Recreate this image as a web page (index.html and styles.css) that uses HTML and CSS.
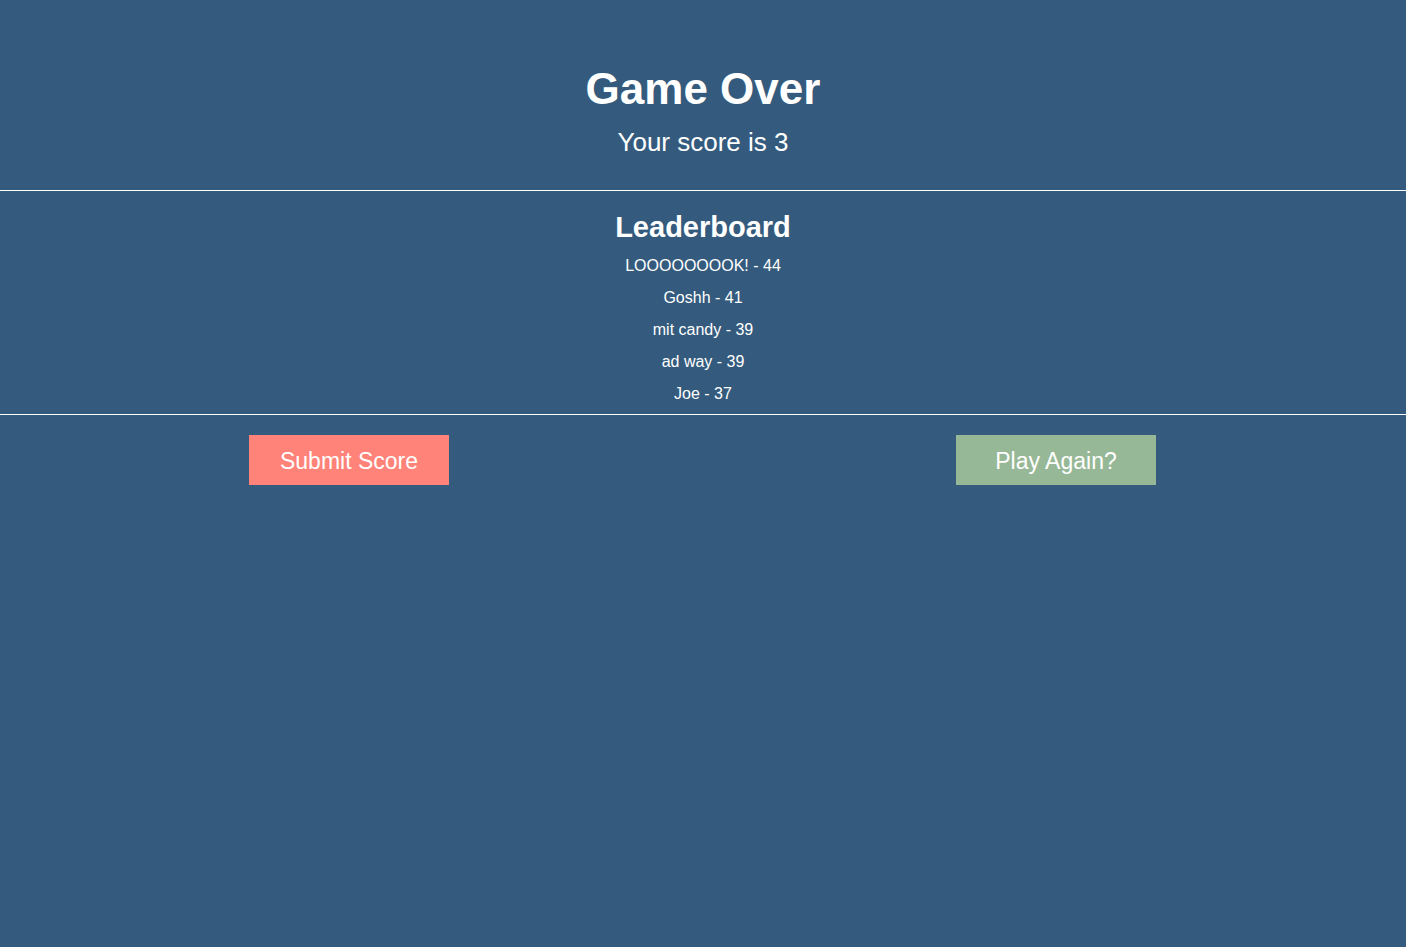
FILE: index.html
```html
<!DOCTYPE html>
<html lang="en">
<head>
<meta charset="utf-8">
<title>Game Over</title>
<link rel="stylesheet" href="styles.css">
</head>
<body>
<div class="page">
  <header class="result">
    <h1 class="title">Game Over</h1>
    <p class="score">Your score is 3</p>
  </header>
  <section class="leaderboard">
    <h2 class="board-title">Leaderboard</h2>
    <ul class="entries">
      <li class="entry">LOOOOOOOOK! - 44</li>
      <li class="entry">Goshh - 41</li>
      <li class="entry">mit candy - 39</li>
      <li class="entry">ad way - 39</li>
      <li class="entry">Joe - 37</li>
    </ul>
  </section>
  <div class="actions">
    <button class="btn btn-submit" type="button">Submit Score</button>
    <button class="btn btn-again" type="button">Play Again?</button>
  </div>
</div>
</body>
</html>
```

FILE: styles.css
```css
html, body {
  margin: 0;
  padding: 0;
  height: 100%;
}

body {
  background: #345b7d;
  color: #ffffff;
  font-family: "Liberation Sans", Arial, Helvetica, sans-serif;
}

.page {
  min-height: 100%;
}

.result {
  padding: 63px 0 33px;
  text-align: center;
}

.title {
  margin: 0;
  font-size: 44px;
  line-height: 52px;
  font-weight: 700;
}

.score {
  margin: 12px 0 0;
  font-size: 26px;
  line-height: 30px;
}

.leaderboard {
  border-top: 1px solid #ffffff;
  border-bottom: 1px solid #ffffff;
  padding: 19px 0 4px;
  text-align: center;
}

.board-title {
  margin: 0 0 6px;
  font-size: 29px;
  line-height: 34px;
  font-weight: 700;
}

.entries {
  list-style: none;
  margin: 0;
  padding: 0;
}

.entry {
  font-size: 16px;
  line-height: 32px;
}

.actions {
  display: flex;
  justify-content: space-between;
  padding: 20px 250px 0 249px;
}

.btn {
  width: 200px;
  height: 50px;
  border: 0;
  border-radius: 0;
  padding: 2px 0 0;
  color: #ffffff;
  font-family: "Liberation Sans", Arial, Helvetica, sans-serif;
  font-size: 23px;
  cursor: pointer;
}

.btn-submit {
  background: #ff8378;
}

.btn-again {
  background: #96b896;
}
```
